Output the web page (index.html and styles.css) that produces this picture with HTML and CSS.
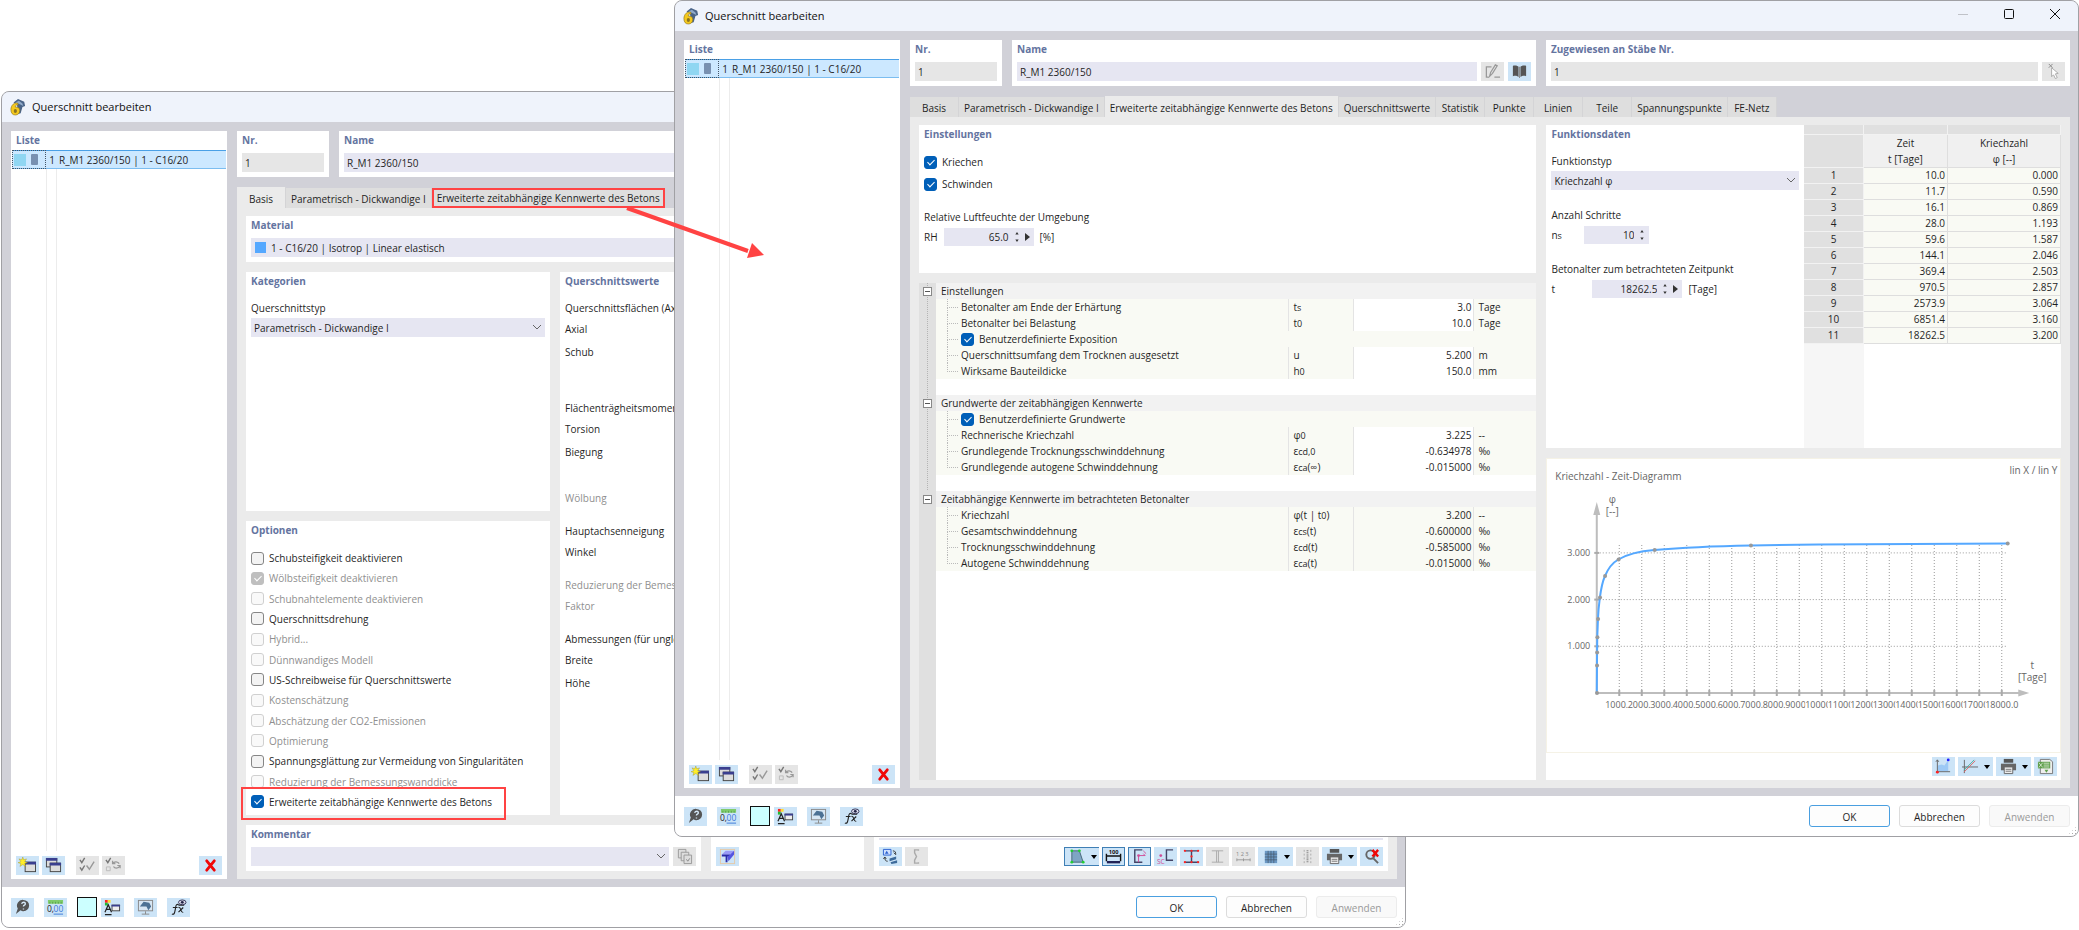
FILE: index.html
```html
<!DOCTYPE html>
<html lang="de">
<head>
    <meta charset="UTF-8">
    <meta name="viewport" content="width=device-width, initial-scale=1.0">
    <title>Querschnitt bearbeiten</title>
    <link rel="stylesheet" href="styles.css">
</head>
<body>
    <!-- Icon-Vorrat -->
    <svg class="sprite" aria-hidden="true">
        <symbol id="i-app" viewBox="0 0 18 20">
            <path d="M4 5 L9 1 L16 4 L17 9 L14 10 L12 17 L9 18 L8 8 Z" fill="#4a6488"/>
            <path d="M6 5 L10 3 L14 6 L15 9 L11 7 Z" fill="#8fa9c9"/>
            <path d="M9 6 C5 4 1 8 1 13 C1 17 3 19 6 19 C9 19 11 17 11 14 C11 11 9 10 6 10 C6 8 7 7 9 8 Z" fill="#f4c81e" stroke="#8a7420" stroke-width=".7"/>
            <ellipse cx="6" cy="14.5" rx="1.8" ry="2.2" fill="#8a7420"/>
        </symbol>
        <symbol id="i-new" viewBox="0 0 20 18">
            <rect x="7.5" y="5.5" width="11" height="10" fill="#ddd" stroke="#444"/>
            <path d="M7 5h12v3H7z" fill="#3a3f8f"/>
            <path d="M5 0l1 3 3-1-2 3 3 1-3 1 1 3-3-2-3 2 1-3-3-1 3-1-2-3 3 1z" fill="#ffee2a" stroke="#998c1a" stroke-width=".4"/>
        </symbol>
        <symbol id="i-windows" viewBox="0 0 20 18">
            <rect x="2.5" y="1.5" width="11" height="9" fill="#ddd" stroke="#444"/>
            <path d="M2 1h12v3H2z" fill="#3a3f8f"/>
            <rect x="6.5" y="6.5" width="11" height="9" fill="#ddd" stroke="#444"/>
            <path d="M6 6h12v3H6z" fill="#3a3f8f"/>
        </symbol>
        <symbol id="i-checkall" viewBox="0 0 20 18">
            <path d="M2 3l2 3 3-5M2 11l2 3 3-5" fill="none" stroke="#777" stroke-width="1.5"/>
            <path d="M9 9l3 4 5-8" fill="none" stroke="#999" stroke-width="1.5"/>
        </symbol>
        <symbol id="i-checkswap" viewBox="0 0 20 18">
            <path d="M2 3l2 3 3-5" fill="none" stroke="#777" stroke-width="1.5"/>
            <path d="M2.5 10.5h4v4h-4z" fill="none" stroke="#bbb"/>
            <path d="M9 7c2-3 6-2 7 0M17 9c-2 4-6 3-7 1M9 4v3h3M17 12V9h-3" fill="none" stroke="#999" stroke-width="1.3"/>
        </symbol>
        <symbol id="i-delete" viewBox="0 0 20 18">
            <path d="M6 4l8 10M14 4L6 14" fill="none" stroke="#f00808" stroke-width="3" stroke-linecap="round"/>
        </symbol>
        <symbol id="i-help" viewBox="0 0 20 18">
            <path d="M11 1a6 6 0 0 1 0 12c-1 0-2 0-3-1L3 16l2-6A6 6 0 0 1 11 1z" fill="#555"/>
            <path d="M9 5c1-2 4-2 4 0s-2 1-2 3M11 10v1" fill="none" stroke="#d6e8f6" stroke-width="1.5"/>
        </symbol>
        <symbol id="i-units" viewBox="0 0 20 18">
            <path d="M2 1h16v4H2z" fill="#7fcb6c"/>
            <path d="M4 3v2M7 3v2M10 3v2M13 3v2M16 3v2" stroke="#4b9440" stroke-width=".7"/>
            <text x="1" y="14" font-size="9" fill="#222">0,</text>
            <text x="8" y="14" font-size="9" fill="#3b78d8">00</text>
            <path d="M8 16h10" stroke="#3b78d8"/>
        </symbol>
        <symbol id="i-legend" viewBox="0 0 20 18">
            <path d="M2 1h3v3H2z" fill="#f22"/><path d="M5 1h3v3H5z" fill="#fd3"/><path d="M2 4h3v3H2z" fill="#2b3"/>
            <path d="M2 14L5.5 6 9 14M3.5 11h4M2 16.5h7" fill="none" stroke="#222" stroke-width="1.3"/>
            <rect x="9.5" y="6.5" width="8" height="6" fill="#eee" stroke="#444"/><path d="M9 6h9v2H9z" fill="#3a3f8f"/>
        </symbol>
        <symbol id="i-view" viewBox="0 0 20 18">
            <rect x="2.5" y="1.5" width="15" height="11" fill="#d7e6f3" stroke="#888"/>
            <path d="M4 8l4-5 6 1 2 4-3 4-2-4z" fill="#4c7194"/>
            <path d="M10 13v3M6 16h8" stroke="#888"/>
        </symbol>
        <symbol id="i-fx" viewBox="0 0 20 18">
            <path d="M3 16c3 1 3-2 4-7 0-2 1-4 3-3M4 9h5M10 9c3-1 2 6 5 5M15 9l-5 5M10 6.5h6" fill="none" stroke="#222" stroke-width="1.2"/>
            <ellipse cx="14" cy="3.5" rx="4" ry="2.5" fill="#dde" stroke="#335"/><circle cx="14" cy="3.5" r="1.5" fill="#224"/>
        </symbol>
        <symbol id="i-edit" viewBox="0 0 20 18">
            <path d="M9 4H3.500v11H6M12 15h6M7 14l1-4 5-8 2 1-5 8z" fill="none" stroke="#999" stroke-width="1.3"/>
        </symbol>
        <symbol id="i-book" viewBox="0 0 20 18">
            <path d="M3 3c3-1 5 0 6 1v11c-1-1-3-2-6-1zM17 3c-3-1-5 0-6 1v11c1-1 3-2 6-1z" fill="#555"/>
            <path d="M9.500 4h1v12h-1z" fill="#888"/>
        </symbol>
        <symbol id="i-pick" viewBox="0 0 20 18">
            <path d="M5 1l4 4M9 1L5 5" stroke="#888"/>
            <path d="M8 5l7 6-3 .5 2 4-2 1-2-4-2 2z" fill="#fff" stroke="#aaa"/>
        </symbol>
        <symbol id="i-area" viewBox="0 0 20 18">
            <path d="M4 14V8l4-1 3 1 4-6v12z" fill="#9cc9f5"/>
            <path d="M3.5 2v14M2 14.5h15M2 4l1.5-2L5 4" fill="none" stroke="#666"/>
            <circle cx="3.5" cy="15" r="1.5" fill="#f22"/><circle cx="15" cy="2" r="1.5" fill="#22f"/>
        </symbol>
        <symbol id="i-lines" viewBox="0 0 20 18">
            <path d="M3.5 2v14M1 9.5h17" stroke="#666"/>
            <path d="M3 15L15 3" stroke="#d66"/><path d="M3 13L14 2" stroke="#4a9"/>
        </symbol>
        <symbol id="i-print" viewBox="0 0 20 18">
            <path d="M5 1h10v4H5z" fill="#555"/><path d="M2 6h16v7H2z" fill="#666"/>
            <path d="M5.5 9.5h9v7h-9z" fill="#eee" stroke="#666"/><path d="M7 12h6M7 14h6" stroke="#777"/>
        </symbol>
        <symbol id="i-table" viewBox="0 0 20 18">
            <path d="M4.5 1.500h10l3 2.500v12.500h-13z" fill="#eee" stroke="#777"/>
            <rect x="2" y="4" width="13" height="7" fill="#5f9f4c"/>
            <path d="M8 5.5h6M8 7.5h6M8 9.5h6M3 5l4 5M7 5l-4 5" stroke="#e8f3e4" stroke-width=".8"/>
            <path d="M9 12.500h4l-2 3z" fill="#5f9f4c"/>
        </symbol>
        <symbol id="i-copies" viewBox="0 0 20 18">
            <path d="M3.500 1.500h8v9h-8z" fill="#ddd" stroke="#999"/>
            <path d="M6.500 4.500h8v9h-8z" fill="#ddd" stroke="#999"/>
            <path d="M9.500 7.500h8v9h-8z" fill="#ddd" stroke="#999"/>
            <path d="M12 12l1.500 2 2-3" fill="none" stroke="#888"/>
        </symbol>
        <symbol id="i-beam" viewBox="0 0 20 18">
            <rect x="2.5" y="1.5" width="15" height="15" fill="none" stroke="#e3c9a8"/>
            <path d="M4 7l4-4h9l-3 4z" fill="#9a9af5"/><path d="M4 7h9v2h-3v6H8V9H4z" fill="#2a2aa8"/><path d="M13 7l4-4v4l-6 7-1-5z" fill="#5555e0"/>
        </symbol>
        <symbol id="i-swap" viewBox="0 0 20 18">
            <path d="M2.5 1.5h8v6h-8z" fill="#cfe0ff" stroke="#2b62d0"/><path d="M4 6l2-3 2 3z" fill="#2b62d0"/>
            <path d="M9 11l7-2v3l-7 2zM10 15l7-2v3l-6 1z" fill="#3d6a9a"/>
            <path d="M12.500 3c3 0 3 2 3 4l-2-2M4 10c0 3 1 4 3 4M2.500 11.500L4 9.500l1.500 2" fill="none" stroke="#333"/>
        </symbol>
        <symbol id="i-brace" viewBox="0 0 20 18">
            <path d="M12 3v-1h-4v3l2 4-2 4v3h4v-1" fill="none" stroke="#aaa" stroke-width="1.500"/>
        </symbol>
        <symbol id="i-section" viewBox="0 0 20 18">
            <path d="M4 3h8l4 12H4z" fill="#7ea5c4" stroke="#467"/>
            <g fill="#2c3"><circle cx="4" cy="3" r="1.5"/><circle cx="12" cy="3" r="1.5"/><circle cx="4" cy="15" r="1.5"/><circle cx="16" cy="15" r="1.5"/></g>
        </symbol>
        <symbol id="i-dim" viewBox="0 0 20 18">
            <text x="5" y="6" font-size="6" font-weight="700" fill="#111">100</text>
            <path d="M2.5 6v8M17.5 6v8M3 8.5h14" stroke="#111" stroke-width="1.5"/><path d="M3 15h14" stroke="#225" stroke-width="2.5"/>
        </symbol>
        <symbol id="i-axes" viewBox="0 0 20 18">
            <path d="M13 2H5v13h8" fill="none" stroke="#446" stroke-width="1.5"/>
            <path d="M9 8h7l-2-2M9 8v7M14 3l3 3" fill="none" stroke="#d04b96"/><circle cx="9" cy="8" r="1.5" fill="#d04b96"/>
        </symbol>
        <symbol id="i-sc" viewBox="0 0 20 18">
            <path d="M18 2h-7v11h7" fill="none" stroke="#446" stroke-width="1.5"/>
            <circle cx="5" cy="8" r="1.5" fill="#d04b96"/><text x="1" y="17" font-size="7" fill="#d04b96">SC</text>
        </symbol>
        <symbol id="i-ibeam" viewBox="0 0 20 18">
            <path d="M3 3h14M3 15h14M10 3v12" stroke="#446" stroke-width="1.5"/>
            <g fill="#f22"><circle cx="3" cy="3" r="1.2"/><circle cx="17" cy="3" r="1.2"/><circle cx="3" cy="15" r="1.2"/><circle cx="17" cy="15" r="1.2"/><circle cx="10" cy="3" r="1.2"/><circle cx="10" cy="15" r="1.2"/><circle cx="10" cy="9" r="1.2"/></g>
        </symbol>
        <symbol id="i-ibeam-off" viewBox="0 0 20 18">
            <path d="M4 3h12M4 15h12M9 3v12M11 3v12" stroke="#aaa" fill="none"/>
        </symbol>
        <symbol id="i-numbers" viewBox="0 0 20 18">
            <text x="2" y="8" font-size="6" fill="#888">1 2 3</text><path d="M3 12.5h14M3 11v3M10 11v3M17 11v3" stroke="#999"/>
        </symbol>
        <symbol id="i-grid" viewBox="0 0 20 18">
            <rect x="4" y="3" width="13" height="13" fill="#6b98c4"/><path d="M4 6.5h13M4 9.5h13M4 12.5h13M7.5 3v13M10.5 3v13M13.5 3v13" stroke="#456" stroke-width=".7"/>
        </symbol>
        <symbol id="i-marks" viewBox="0 0 20 18">
            <path d="M10 2v14" stroke="#888" stroke-dasharray="1 1" stroke-width="2"/><path d="M6.5 2v14M13.5 2v14" stroke="#aaa" stroke-dasharray="2 2"/>
        </symbol>
        <symbol id="i-zoomoff" viewBox="0 0 20 18">
            <circle cx="9" cy="7" r="4.5" fill="none" stroke="#666" stroke-width="2"/><path d="M12 11l5 5" stroke="#666" stroke-width="2"/>
            <path d="M11 2l6 7M17 2l-6 7" stroke="#f00808" stroke-width="2.5"/>
        </symbol>
    </svg>

    <!-- Hinteres Fenster: Register Basis -->
    <section class="window window-back">
        <header class="titlebar">
            <svg class="app-icon"><use href="#i-app"/></svg>
            <h1>Querschnitt bearbeiten</h1>
        </header>
        <div class="window-body">
            <aside class="panel list-panel">
                <h2>Liste</h2>
                <div class="list">
                    <div class="list-row">
                        <span class="list-mark"><i class="mark-color"></i><i class="mark-shape"></i></span>
                        <span class="list-no">1</span>
                        <span class="list-name">R_M1 2360/150 | 1 - C16/20</span>
                    </div>
                </div>
                <div class="list-tools">
                    <button class="tool" title="Neu"><svg><use href="#i-new"/></svg></button>
                    <button class="tool" title="Kopieren"><svg><use href="#i-windows"/></svg></button>
                    <button class="tool off apart" disabled title="Alle"><svg><use href="#i-checkall"/></svg></button>
                    <button class="tool off" disabled title="Umkehren"><svg><use href="#i-checkswap"/></svg></button>
                    <button class="tool last" title="Löschen"><svg><use href="#i-delete"/></svg></button>
                </div>
            </aside>
            <div class="main">
                <div class="head-row">
                    <div class="panel nr-panel">
                        <h2><label for="a-nr">Nr.</label></h2>
                        <input class="field readonly" id="a-nr" value="1" readonly>
                    </div>
                    <div class="panel grow">
                        <h2><label for="a-name">Name</label></h2>
                        <input class="field" id="a-name" value="R_M1 2360/150">
                    </div>
                    <div class="panel grow"></div>
                </div>
                <nav class="tabs">
                    <button class="tab active">Basis</button>
                    <button class="tab">Parametrisch - Dickwandige I</button>
                    <button class="tab marked">Erweiterte zeitabhängige Kennwerte des Betons</button>
                </nav>
                <div class="sheet">
                    <div class="panel">
                        <h2><label for="a-mat">Material</label></h2>
                        <div class="material">
                            <i class="swatch"></i>
                            <input class="field" id="a-mat" value="1 - C16/20 | Isotrop | Linear elastisch">
                        </div>
                    </div>
                    <div class="basis">
                        <div class="basis-left">
                            <div class="panel categories">
                                <h2>Kategorien</h2>
                                <label class="caption" for="a-type">Querschnittstyp</label>
                                <div class="select">
                                    <select id="a-type"><option>Parametrisch - Dickwandige I</option></select>
                                    <svg viewBox="0 0 8 5"><path d="M0 0l4 4 4-4"/></svg>
                                </div>
                            </div>
                            <div class="panel options">
                                <h2>Optionen</h2>
                                <div class="option-list">
                                    <label><input type="checkbox">Schubsteifigkeit deaktivieren</label>
                                    <label class="dim"><input type="checkbox" checked disabled>Wölbsteifigkeit deaktivieren</label>
                                    <label class="dim"><input type="checkbox" disabled>Schubnahtelemente deaktivieren</label>
                                    <label><input type="checkbox">Querschnittsdrehung</label>
                                    <label class="dim"><input type="checkbox" disabled>Hybrid...</label>
                                    <label class="dim"><input type="checkbox" disabled>Dünnwandiges Modell</label>
                                    <label><input type="checkbox">US-Schreibweise für Querschnittswerte</label>
                                    <label class="dim"><input type="checkbox" disabled>Kostenschätzung</label>
                                    <label class="dim"><input type="checkbox" disabled>Abschätzung der CO2-Emissionen</label>
                                    <label class="dim"><input type="checkbox" disabled>Optimierung</label>
                                    <label><input type="checkbox">Spannungsglättung zur Vermeidung von Singularitäten</label>
                                    <label class="dim"><input type="checkbox" disabled>Reduzierung der Bemessungswanddicke</label>
                                    <label class="marked"><input type="checkbox" checked>Erweiterte zeitabhängige Kennwerte des Betons</label>
                                </div>
                            </div>
                        </div>
                        <div class="panel values">
                            <h2>Querschnittswerte</h2>
                            <dl>
                                <dt>Querschnittsflächen (Axial/Schub)</dt>
                                <dd>Axial</dd>
                                <dd>Schub</dd>
                            </dl>
                            <dl class="after-wide">
                                <dt>Flächenträgheitsmomente (Torsion/Biegung)</dt>
                                <dd>Torsion</dd>
                                <dd>Biegung</dd>
                            </dl>
                            <dl class="after-mid dim">
                                <dt>Wölbung</dt>
                            </dl>
                            <dl>
                                <dt>Hauptachsenneigung</dt>
                                <dd>Winkel</dd>
                            </dl>
                            <dl class="dim">
                                <dt>Reduzierung der Bemessungswanddicke</dt>
                                <dd>Faktor</dd>
                            </dl>
                            <dl>
                                <dt>Abmessungen (für ungleichmäßige Temperaturlasten)</dt>
                                <dd>Breite</dd>
                                <dd>Höhe</dd>
                            </dl>
                        </div>
                    </div>
                    <div class="bottom-row">
                        <div class="panel comment">
                            <h2><label for="a-comment">Kommentar</label></h2>
                            <div class="line">
                                <div class="select">
                                    <select id="a-comment"><option></option></select>
                                    <svg viewBox="0 0 8 5"><path d="M0 0l4 4 4-4"/></svg>
                                </div>
                                <button class="tool off" disabled title="Übernehmen"><svg><use href="#i-copies"/></svg></button>
                            </div>
                        </div>
                        <div class="panel check">
                            <button class="tool" title="Bemessung"><svg><use href="#i-beam"/></svg></button>
                        </div>
                        <div class="panel graphic">
                            <div class="graphic-tools">
                                <button class="tool" title="Tauschen"><svg><use href="#i-swap"/></svg></button>
                                <button class="tool off" disabled title="Form"><svg><use href="#i-brace"/></svg></button>
                                <button class="tool drop on last" title="Ansicht"><svg><use href="#i-section"/></svg><b></b></button>
                                <button class="tool on" title="Maße"><svg><use href="#i-dim"/></svg></button>
                                <button class="tool on" title="Achsen"><svg><use href="#i-axes"/></svg></button>
                                <button class="tool" title="Schubmittelpunkt"><svg><use href="#i-sc"/></svg></button>
                                <button class="tool" title="Punkte"><svg><use href="#i-ibeam"/></svg></button>
                                <button class="tool off" disabled title="Linien"><svg><use href="#i-ibeam-off"/></svg></button>
                                <button class="tool off" disabled title="Nummern"><svg><use href="#i-numbers"/></svg></button>
                                <button class="tool drop" title="Raster"><svg><use href="#i-grid"/></svg><b></b></button>
                                <button class="tool off" disabled title="Marken"><svg><use href="#i-marks"/></svg></button>
                                <button class="tool drop" title="Drucken"><svg><use href="#i-print"/></svg><b></b></button>
                                <button class="tool" title="Zoom zurücksetzen"><svg><use href="#i-zoomoff"/></svg></button>
                            </div>
                        </div>
                    </div>
                </div>
            </div>
        </div>
        <footer class="footer">
            <button class="tool" title="Hilfe"><svg><use href="#i-help"/></svg></button>
            <button class="tool" title="Einheiten"><svg><use href="#i-units"/></svg></button>
            <button class="color-box" title="Farbe"></button>
            <button class="tool" title="Legende"><svg><use href="#i-legend"/></svg></button>
            <button class="tool" title="Darstellung"><svg><use href="#i-view"/></svg></button>
            <button class="tool" title="Formeln"><svg><use href="#i-fx"/></svg></button>
            <div class="dialog-buttons">
                <button class="btn primary">OK</button>
                <button class="btn">Abbrechen</button>
                <button class="btn" disabled>Anwenden</button>
            </div>
            <i class="grip"></i>
        </footer>
    </section>

    <!-- Vorderes Fenster: Erweiterte zeitabhängige Kennwerte -->
    <section class="window window-front">
        <header class="titlebar">
            <svg class="app-icon"><use href="#i-app"/></svg>
            <h1>Querschnitt bearbeiten</h1>
            <div class="win-controls">
                <button title="Minimieren" disabled><svg viewBox="0 0 12 12"><path d="M1 6.5h10"/></svg></button>
                <button title="Maximieren"><svg viewBox="0 0 12 12"><rect x="1.5" y="1.5" width="9" height="9" rx="1"/></svg></button>
                <button title="Schließen"><svg viewBox="0 0 12 12"><path d="M1 1l10 10M11 1L1 11"/></svg></button>
            </div>
        </header>
        <div class="window-body">
            <aside class="panel list-panel">
                <h2>Liste</h2>
                <div class="list">
                    <div class="list-row">
                        <span class="list-mark"><i class="mark-color"></i><i class="mark-shape"></i></span>
                        <span class="list-no">1</span>
                        <span class="list-name">R_M1 2360/150 | 1 - C16/20</span>
                    </div>
                </div>
                <div class="list-tools">
                    <button class="tool" title="Neu"><svg><use href="#i-new"/></svg></button>
                    <button class="tool" title="Kopieren"><svg><use href="#i-windows"/></svg></button>
                    <button class="tool off apart" disabled title="Alle"><svg><use href="#i-checkall"/></svg></button>
                    <button class="tool off" disabled title="Umkehren"><svg><use href="#i-checkswap"/></svg></button>
                    <button class="tool last" title="Löschen"><svg><use href="#i-delete"/></svg></button>
                </div>
            </aside>
            <div class="main">
                <div class="head-row">
                    <div class="panel nr-panel">
                        <h2><label for="b-nr">Nr.</label></h2>
                        <input class="field readonly" id="b-nr" value="1" readonly>
                    </div>
                    <div class="panel grow">
                        <h2><label for="b-name">Name</label></h2>
                        <div class="line">
                            <input class="field" id="b-name" value="R_M1 2360/150">
                            <button class="tool off" disabled title="Bearbeiten"><svg><use href="#i-edit"/></svg></button>
                            <button class="tool" title="Bibliothek"><svg><use href="#i-book"/></svg></button>
                        </div>
                    </div>
                    <div class="panel grow">
                        <h2><label for="b-members">Zugewiesen an Stäbe Nr.</label></h2>
                        <div class="line">
                            <input class="field readonly" id="b-members" value="1" readonly>
                            <button class="tool off" disabled title="Auswählen"><svg><use href="#i-pick"/></svg></button>
                        </div>
                    </div>
                </div>
                <nav class="tabs">
                    <button class="tab">Basis</button>
                    <button class="tab">Parametrisch - Dickwandige I</button>
                    <button class="tab active">Erweiterte zeitabhängige Kennwerte des Betons</button>
                    <button class="tab">Querschnittswerte</button>
                    <button class="tab">Statistik</button>
                    <button class="tab">Punkte</button>
                    <button class="tab">Linien</button>
                    <button class="tab">Teile</button>
                    <button class="tab">Spannungspunkte</button>
                    <button class="tab">FE-Netz</button>
                </nav>
                <div class="sheet sheet-cols">
                    <div class="col-left">
                        <div class="panel settings">
                            <h2>Einstellungen</h2>
                            <label class="check-line"><input type="checkbox" checked>Kriechen</label>
                            <label class="check-line"><input type="checkbox" checked>Schwinden</label>
                            <p class="caption">Relative Luftfeuchte der Umgebung</p>
                            <div class="value-line">
                                <label for="b-rh">RH</label>
                                <div class="spin wide">
                                    <input id="b-rh" value="65.0">
                                    <svg viewBox="0 0 6 12"><path d="M1 3l2-3 2 3zM1 9l2 3 2-3z"/></svg>
                                    <svg class="play" viewBox="0 0 5 8"><path d="M0 0l5 4-5 4z"/></svg>
                                </div>
                                <span>[%]</span>
                            </div>
                        </div>
                        <div class="tree-panel">
                            <table class="tree">
                                <colgroup><col class="c-gutter"><col><col class="c-sym"><col class="c-val"><col class="c-unit"></colgroup>
                                <tbody>
                                    <tr class="group"><td><button class="toggle"></button></td><th colspan="4">Einstellungen</th></tr>
                                    <tr><td></td><td>Betonalter am Ende der Erhärtung</td><td>t<small>s</small></td><td class="edit">3.0</td><td>Tage</td></tr>
                                    <tr><td></td><td>Betonalter bei Belastung</td><td>t<small>0</small></td><td class="edit">10.0</td><td>Tage</td></tr>
                                    <tr><td></td><td colspan="4"><label><input type="checkbox" checked>Benutzerdefinierte Exposition</label></td></tr>
                                    <tr><td></td><td>Querschnittsumfang dem Trocknen ausgesetzt</td><td>u</td><td class="edit">5.200</td><td>m</td></tr>
                                    <tr class="end"><td></td><td>Wirksame Bauteildicke</td><td>h<small>0</small></td><td class="edit">150.0</td><td>mm</td></tr>
                                    <tr class="gap"><td></td><td colspan="4"></td></tr>
                                    <tr class="group"><td><button class="toggle"></button></td><th colspan="4">Grundwerte der zeitabhängigen Kennwerte</th></tr>
                                    <tr><td></td><td colspan="4"><label><input type="checkbox" checked>Benutzerdefinierte Grundwerte</label></td></tr>
                                    <tr><td></td><td>Rechnerische Kriechzahl</td><td>φ<small>0</small></td><td class="edit">3.225</td><td>--</td></tr>
                                    <tr><td></td><td>Grundlegende Trocknungsschwinddehnung</td><td>ε<small>cd,0</small></td><td class="edit">-0.634978</td><td>‰</td></tr>
                                    <tr class="end"><td></td><td>Grundlegende autogene Schwinddehnung</td><td>ε<small>ca</small>(∞)</td><td class="edit">-0.015000</td><td>‰</td></tr>
                                    <tr class="gap"><td></td><td colspan="4"></td></tr>
                                </tbody>
                                <tbody class="last-group">
                                    <tr class="group"><td><button class="toggle"></button></td><th colspan="4">Zeitabhängige Kennwerte im betrachteten Betonalter</th></tr>
                                    <tr><td></td><td>Kriechzahl</td><td>φ(t | t<small>0</small>)</td><td>3.200</td><td>--</td></tr>
                                    <tr><td></td><td>Gesamtschwinddehnung</td><td>ε<small>cs</small>(t)</td><td>-0.600000</td><td>‰</td></tr>
                                    <tr><td></td><td>Trocknungsschwinddehnung</td><td>ε<small>cd</small>(t)</td><td>-0.585000</td><td>‰</td></tr>
                                    <tr class="end"><td></td><td>Autogene Schwinddehnung</td><td>ε<small>ca</small>(t)</td><td>-0.015000</td><td>‰</td></tr>
                                </tbody>
                            </table>
                        </div>
                    </div>
                    <div class="col-right">
                        <div class="function">
                            <div class="panel function-form">
                                <h2>Funktionsdaten</h2>
                                <label class="caption" for="b-ftype">Funktionstyp</label>
                                <div class="select">
                                    <select id="b-ftype"><option>Kriechzahl φ</option></select>
                                    <svg viewBox="0 0 8 5"><path d="M0 0l4 4 4-4"/></svg>
                                </div>
                                <p class="caption spaced">Anzahl Schritte</p>
                                <div class="value-line">
                                    <label class="sym" for="b-steps">n<small>s</small></label>
                                    <div class="spin">
                                        <input id="b-steps" value="10">
                                        <svg viewBox="0 0 6 12"><path d="M1 3l2-3 2 3zM1 9l2 3 2-3z"/></svg>
                                    </div>
                                </div>
                                <p class="caption spaced">Betonalter zum betrachteten Zeitpunkt</p>
                                <div class="value-line">
                                    <label class="sym sym-wide" for="b-age">t</label>
                                    <div class="spin wide">
                                        <input id="b-age" value="18262.5">
                                        <svg viewBox="0 0 6 12"><path d="M1 3l2-3 2 3zM1 9l2 3 2-3z"/></svg>
                                        <svg class="play" viewBox="0 0 5 8"><path d="M0 0l5 4-5 4z"/></svg>
                                    </div>
                                    <span>[Tage]</span>
                                </div>
                            </div>
                            <div class="data-wrap">
                                <table class="data">
                                    <colgroup><col class="d-no"><col class="d-time"><col></colgroup>
                                    <thead>
                                        <tr class="strip"><th></th><th></th><th></th></tr>
                                        <tr><th></th><th>Zeit<br>t [Tage]</th><th>Kriechzahl<br>φ [--]</th></tr>
                                    </thead>
                                    <tbody>
                                        <tr><th>1</th><td>10.0</td><td>0.000</td></tr>
                                        <tr><th>2</th><td>11.7</td><td>0.590</td></tr>
                                        <tr><th>3</th><td>16.1</td><td>0.869</td></tr>
                                        <tr><th>4</th><td>28.0</td><td>1.193</td></tr>
                                        <tr><th>5</th><td>59.6</td><td>1.587</td></tr>
                                        <tr><th>6</th><td>144.1</td><td>2.046</td></tr>
                                        <tr><th>7</th><td>369.4</td><td>2.503</td></tr>
                                        <tr><th>8</th><td>970.5</td><td>2.857</td></tr>
                                        <tr><th>9</th><td>2573.9</td><td>3.064</td></tr>
                                        <tr><th>10</th><td>6851.4</td><td>3.160</td></tr>
                                        <tr><th>11</th><td>18262.5</td><td>3.200</td></tr>
                                    </tbody>
                                </table>
                            </div>
                        </div>
                        <div class="chart-panel">
                            <div class="chart">
                                <svg id="chart" viewBox="0 0 512 293">
                                    <text x="8" y="21">Kriechzahl - Zeit-Diagramm</text>
                                    <text x="510" y="15" text-anchor="end">lin X / lin Y</text>
                                    <g id="grid" class="grid"></g>
                                    <path class="axis" d="M49.5 234V55M49.5 234H472"/>
                                    <path class="axis-head" d="M46 56l3.5-13 3.5 13zM471 230.5l11 3.5-11 3.5z"/>
                                    <g id="ticks"></g>
                                    <text x="65" y="44" text-anchor="middle">φ</text>
                                    <text x="65" y="56" text-anchor="middle">[--]</text>
                                    <text x="485" y="210" text-anchor="middle">t</text>
                                    <text x="485" y="222" text-anchor="middle">[Tage]</text>
                                    <path class="curve" d="M49.5 234L49.7 206 49.8 193 50 178 50.7 160C51 150 52 143 52.6 138.5C54 128 55.5 122 57.7 117C61 109 65 104 71 100.5C81 94.5 95 92 107 91C135 88.5 170 87 203.5 86.4C290 85.2 380 84.6 460 84.6"/>
                                    <g id="points" class="points"></g>
                                </svg>
                            </div>
                            <div class="chart-tools">
                                <button class="tool" title="Fläche"><svg><use href="#i-area"/></svg></button>
                                <button class="tool drop" title="Achsen"><svg><use href="#i-lines"/></svg><b></b></button>
                                <button class="tool drop" title="Drucken"><svg><use href="#i-print"/></svg><b></b></button>
                                <button class="tool" title="Export"><svg><use href="#i-table"/></svg></button>
                            </div>
                        </div>
                    </div>
                </div>
            </div>
        </div>
        <footer class="footer">
            <button class="tool" title="Hilfe"><svg><use href="#i-help"/></svg></button>
            <button class="tool" title="Einheiten"><svg><use href="#i-units"/></svg></button>
            <button class="color-box" title="Farbe"></button>
            <button class="tool" title="Legende"><svg><use href="#i-legend"/></svg></button>
            <button class="tool" title="Darstellung"><svg><use href="#i-view"/></svg></button>
            <button class="tool" title="Formeln"><svg><use href="#i-fx"/></svg></button>
            <div class="dialog-buttons">
                <button class="btn primary">OK</button>
                <button class="btn">Abbrechen</button>
                <button class="btn" disabled>Anwenden</button>
            </div>
            <i class="grip"></i>
        </footer>
    </section>

    <!-- Verweispfeil vom Register zum vorderen Fenster -->
    <svg class="arrow" viewBox="0 0 150 60"><path d="M7 8l121 43" stroke="#ff4343" stroke-width="4"/><path d="M132 43l12 12-17 3z" fill="#ff4343"/></svg>

    <script src="chart.js"></script>
</body>
</html>
```
FILE: chart.js
```js
// Achsen: 1000 Tage = 22.5, Kriechzahl 1.0 = 46.7
const X0 = 49.5, Y0 = 234, DX = 22.5, DY = 46.7;
const data = [[10, 0], [11.7, 0.59], [16.1, 0.869], [28, 1.193], [59.6, 1.587], [144.1, 2.046],
    [369.4, 2.503], [970.5, 2.857], [2573.9, 3.064], [6851.4, 3.16], [18262.5, 3.2]];

let grid = '', ticks = '', points = '';

for (let i = 1; i <= 18; i++) {
    const x = X0 + i * DX;
    const label = (i * 1000).toFixed(1);
    // jede Beschriftung verdeckt das Ende der vorigen
    const w = label.length > 6 ? 33 : 28;
    grid += `<path d="M${x} ${Y0}V86"/>`;
    ticks += `<path class="tick" d="M${x} 231v6"/>`;
    ticks += `<rect x="${x - w / 2}" y="239" width="${w}" height="14" fill="#fff"/>`;
    ticks += `<text class="small" x="${x}" y="249" text-anchor="middle">${label}</text>`;
}

for (let i = 1; i <= 3; i++) {
    const y = Y0 - i * DY;
    grid += `<path d="M${X0} ${y}H460"/>`;
    ticks += `<path class="tick" d="M47 ${y}h5"/>`;
    ticks += `<text class="small" x="43" y="${y + 3}" text-anchor="end">${i.toFixed(3)}</text>`;
}

data.forEach(([t, phi]) => {
    points += `<circle cx="${X0 + t / 1000 * DX}" cy="${Y0 - phi * DY}" r="2"/>`;
});

document.getElementById('grid').innerHTML = grid;
document.getElementById('ticks').innerHTML = ticks;
document.getElementById('points').innerHTML = points;
```
FILE: styles.css
```css
* {
    margin: 0;
    padding: 0;
    box-sizing: border-box;
}

body {
    position: relative;
    min-height: 100vh;
    overflow: hidden;
    background: #fff;
    color: #1f1f1f;
    font: 10px/16px "Open Sans", "Noto Sans", sans-serif;
}

button,
input,
select {
    font: inherit;
    color: inherit;
    border: none;
    outline: none;
}

small {
    font-size: 9px;
    line-height: 1;
}

.sprite {
    display: none;
}

/* Fenster */
.window {
    position: absolute;
    display: flex;
    flex-direction: column;
    background: #d1d1d8;
    border: 1px solid #a0a0a4;
    border-radius: 8px;
    overflow: hidden;
}

.window-back {
    left: 1px;
    top: 91px;
    width: 1405px;
    bottom: 2px;
}

.window-front {
    left: 674px;
    top: 0;
    right: 0;
    bottom: 93px;
}

.titlebar {
    flex: none;
    display: flex;
    align-items: center;
    height: 30px;
    padding-left: 8px;
    background: #eff3fb;
}

.titlebar h1 {
    font-size: 11px;
    font-weight: 400;
    color: #111;
}

.app-icon {
    width: 16px;
    height: 18px;
    margin-right: 6px;
}

.win-controls {
    display: flex;
    margin-left: auto;
}

.win-controls button {
    width: 46px;
    height: 28px;
    background: none;
}

.win-controls svg {
    width: 12px;
    height: 12px;
    fill: none;
    stroke: #111;
}

.win-controls button:disabled svg {
    stroke: #c0c2c8;
}

.window-body {
    flex: 1;
    min-height: 0;
    display: flex;
    gap: 10px;
    padding: 9px 8px 8px 9px;
}

.panel {
    background: #fff;
    padding: 1px 5px 5px;
}

.panel h2 {
    font-size: 10px;
    line-height: 16px;
    font-weight: 700;
    color: #6474a0;
}

.main {
    flex: 1;
    min-width: 0;
    display: flex;
    flex-direction: column;
}

/* Liste links */
.list-panel {
    width: 216px;
    display: flex;
    flex-direction: column;
    padding: 1px 0 4px;
}

.list-panel h2 {
    padding-left: 5px;
}

.list {
    flex: 1;
    margin: 2px 1px 0;
    background: linear-gradient(#ececec, #ececec) 34px 0 / 1px 100% no-repeat,
        linear-gradient(#ececec, #ececec) 44px 0 / 1px 100% no-repeat;
}

.list-row {
    display: flex;
    align-items: center;
    height: 19px;
    background: #cce8ff;
    border-top: 1px solid #4aa0e6;
    border-bottom: 1px solid #7bbdf0;
}

.list-mark {
    display: flex;
    align-items: center;
    gap: 5px;
    width: 34px;
    height: 19px;
    padding-left: 1px;
    border: 1px dotted #456;
}

.mark-color {
    width: 12px;
    height: 12px;
    background: #8fd6f2;
}

.mark-shape {
    width: 7px;
    height: 11px;
    background: #7890b0;
    border-radius: 1px;
}

.list-no {
    width: 9px;
    text-align: right;
}

.list-name {
    padding-left: 4px;
}

.list-tools {
    display: flex;
    gap: 3px;
    padding: 5px 5px 0;
}

.apart {
    margin-left: 8px;
}

/* Symbolschaltflächen */
.tool {
    flex: none;
    display: flex;
    align-items: center;
    justify-content: center;
    width: 23px;
    height: 19px;
    background: #cce4f7;
}

.tool svg {
    width: 19px;
    height: 17px;
}

.tool.off {
    background: #e5e5e5;
}

.tool.on {
    border: 1px solid #3f7fb5;
}

.tool.drop {
    width: 35px;
    gap: 4px;
}

.tool.drop b {
    border: 3px solid transparent;
    border-top: 4px solid #000;
    border-bottom: none;
}

.tool.drop.on {
    border-width: 1px 0 1px 1px;
}

.last {
    margin-left: auto;
}

/* Kopfzeile mit Nr., Name, Zuweisung */
.head-row {
    display: flex;
    gap: 10px;
}

.nr-panel {
    width: 92px;
}

.grow {
    flex: 1;
    min-width: 0;
}

.field {
    display: block;
    width: 100%;
    min-width: 0;
    height: 19px;
    padding: 1px 3px 0;
    background: #e6e6f2;
}

.field.readonly {
    background: #e6e6e6;
}

.head-row .panel {
    height: 46px;
}

.head-row h2,
.sheet > .panel h2,
.comment h2 {
    margin-bottom: 5px;
}

.line {
    display: flex;
    gap: 4px;
}

/* Register */
.tabs {
    display: flex;
    align-items: flex-end;
    margin-top: 10px;
}

.tab {
    min-width: 49px;
    height: 20px;
    padding: 2px 5px 0;
    background: #dedede;
    border-right: 1px solid #d4d4d6;
    white-space: nowrap;
}

.tab.active {
    height: 21px;
    background: #ebebeb;
}

.tab.marked {
    padding: 0 3px;
    border: 2px solid #ff4343;
}

.sheet {
    flex: 1;
    min-height: 0;
    display: flex;
    flex-direction: column;
    gap: 10px;
    padding: 8px 9px;
    background: #ebebeb;
}

/* Register Basis */
.material {
    display: flex;
    align-items: center;
    gap: 2px;
    background: #e6e6f2;
    padding-left: 4px;
}

.swatch {
    flex: none;
    width: 11px;
    height: 11px;
    background: #55a8ff;
}

.basis {
    flex: 1;
    min-height: 0;
    display: flex;
    gap: 10px;
}

.basis-left {
    width: 304px;
    display: flex;
    flex-direction: column;
    gap: 10px;
}

.categories {
    flex: 1;
}

.caption {
    display: block;
    margin-top: 11px;
}

.select {
    position: relative;
    flex: 1;
    margin-top: 2px;
}

.line .select {
    margin-top: 0;
}

.select select {
    display: block;
    appearance: none;
    width: 100%;
    height: 19px;
    padding: 1px 3px 0;
    background: #e6e6f2;
}

.select svg {
    position: absolute;
    right: 4px;
    top: 7px;
    width: 8px;
    height: 5px;
    fill: none;
    stroke: #666;
    pointer-events: none;
}

.options {
    height: 294px;
    display: flex;
    flex-direction: column;
}

.option-list {
    flex: 1;
    display: flex;
    flex-direction: column;
    justify-content: space-between;
    margin-top: 12px;
}

label input[type="checkbox"] {
    flex: none;
    appearance: none;
    position: relative;
    width: 13px;
    height: 13px;
    margin-right: 5px;
    background: #f3f3f3;
    border: 1px solid #868686;
    border-radius: 3px;
}

label input[type="checkbox"]:checked {
    background: #005fb8;
    border-color: #005fb8;
}

label input[type="checkbox"]:checked::after {
    content: "";
    position: absolute;
    left: 4px;
    top: 1px;
    width: 3px;
    height: 6px;
    border: solid #fff;
    border-width: 0 1px 1px 0;
    transform: rotate(45deg);
}

label input[type="checkbox"]:disabled {
    background: #f9f9f9;
    border-color: #d0d0d0;
}

label input[type="checkbox"]:disabled:checked {
    background: #bfbfbf;
    border-color: #bfbfbf;
}

.option-list label {
    position: relative;
    display: flex;
    align-items: center;
    height: 16px;
}

.option-list .marked::after {
    content: "";
    position: absolute;
    left: -10px;
    top: -7px;
    width: 261px;
    height: 29px;
    border: 2px solid #ff4343;
}

.dim {
    color: #8f8f8f;
}

.values {
    flex: 1;
    white-space: nowrap;
}

.values dl {
    margin-top: 17px;
}

.values h2 + dl {
    margin-top: 11px;
}

.values .after-wide {
    margin-top: 40px;
}

.values .after-mid {
    margin-top: 30px;
}

.values dd {
    margin-top: 5px;
}

.values dd + dd {
    margin-top: 7px;
}

.bottom-row {
    display: flex;
    gap: 10px;
}

.comment {
    width: 455px;
}

.check {
    width: 153px;
    display: flex;
    align-items: flex-end;
}

.graphic {
    flex: 1;
    display: flex;
    flex-direction: column;
    justify-content: flex-end;
}

.graphic-tools {
    display: flex;
    gap: 3px;
    padding-top: 7px;
    border-top: 2px solid #e6e6f2;
}

/* Register Kennwerte des Betons */
.sheet-cols {
    flex-direction: row;
}

.col-left,
.col-right {
    flex: 6 1 0;
    min-width: 0;
    display: flex;
    flex-direction: column;
    gap: 10px;
}

.col-right {
    flex-grow: 5;
}

.settings {
    height: 148px;
}

.check-line {
    display: flex;
    align-items: center;
    height: 22px;
}

.settings h2 {
    margin-bottom: 9px;
}

.settings .caption {
    margin-top: 14px;
}

.value-line {
    display: flex;
    align-items: center;
    gap: 6px;
    margin-top: 3px;
}

.spin {
    display: flex;
    align-items: center;
    gap: 5px;
    width: 65px;
    height: 18px;
    padding-right: 4px;
    background: #e6e6f2;
}

.spin.wide {
    width: 90px;
}

.spin input {
    flex: 1;
    min-width: 0;
    background: none;
    text-align: right;
}

.spin svg {
    width: 6px;
    height: 10px;
    fill: #333;
}

.spin .play {
    width: 5px;
    height: 8px;
}

.tree-panel {
    flex: 1;
    min-height: 0;
    background: linear-gradient(to right, #e0e0e0 17px, #fff 17px);
}

table {
    width: 100%;
    table-layout: fixed;
    border-collapse: separate;
    border-spacing: 0;
}

.c-gutter { width: 17px; }
.c-sym { width: 65px; }
.c-val { width: 120px; }
.c-unit { width: 63px; }

.tree td,
.tree th {
    height: 16px;
    line-height: 14px;
    font-weight: 400;
    text-align: left;
    white-space: nowrap;
}

.tree th {
    padding-left: 5px;
    background: #f2f2f2;
}

.tree td:first-child {
    padding-left: 4px;
    background: repeating-linear-gradient(#b4b4b4 0 1px, transparent 1px 2px) 8px 0 / 1px 100% no-repeat;
}

.tree .last-group td:first-child {
    background: none;
}

.tree td:nth-child(n + 2) {
    padding-left: 4px;
    background: #f9faf4;
    border-left: 1px solid #e4e4e4;
}

.tree td:nth-child(2) {
    position: relative;
    padding-left: 25px;
    border-left: none;
}

.tree td:nth-child(2)::before {
    content: "";
    position: absolute;
    left: 11px;
    top: 0;
    width: 10px;
    height: 8px;
    border-left: 1px dotted #bbb;
    border-bottom: 1px dotted #bbb;
}

.tree tr:not(.end) td:nth-child(2)::after {
    content: "";
    position: absolute;
    left: 11px;
    top: 8px;
    height: 8px;
    border-left: 1px dotted #bbb;
}

.tree .gap td:nth-child(2) {
    background: #fff;
}

.tree .gap td:nth-child(2)::before,
.tree .gap td:nth-child(2)::after {
    display: none;
}

.tree td:nth-child(4) {
    padding-right: 2px;
    text-align: right;
}

.tree td.edit {
    background: #fff;
}

.tree label {
    display: flex;
    align-items: center;
    height: 16px;
}

.toggle {
    display: block;
    width: 9px;
    height: 9px;
    border: 1px solid #888;
    background: linear-gradient(#555, #555) center / 5px 1px no-repeat #fff;
}

/* Funktionsdaten */
.function {
    display: flex;
    height: 323px;
    background: #fff;
}

.function-form {
    flex: 1;
}

.function-form .spaced {
    margin-top: 17px;
}

.sym {
    width: 27px;
}

.sym-wide {
    width: 35px;
}

.data-wrap {
    width: 257px;
    background: linear-gradient(to right, #f6f6f6 60px, #fff 60px);
}

.d-no { width: 60px; }
.d-time { width: 84px; }

.data th,
.data td {
    height: 16px;
    line-height: 15px;
    font-weight: 400;
    border-right: 1px solid #dedede;
    border-bottom: 1px solid #dedede;
}

.data td {
    padding-right: 2px;
    text-align: right;
    background: #f9faf4;
}

.data thead th {
    line-height: 16px;
    background: #f0f0f0;
}

.data tr th:first-child,
.data .strip th {
    background: #e0e0e0;
    border-color: #f2f2f2;
}

.data .strip th {
    height: 10px;
}

/* Diagramm */
.chart-panel {
    flex: 1;
    min-height: 0;
    display: flex;
    flex-direction: column;
    background: #fff;
}

.chart {
    flex: 1;
    min-height: 0;
    border: 1px solid #f5f2e6;
}

.chart svg {
    display: block;
    width: 100%;
    height: 100%;
}

.chart text {
    font-size: 10px;
    fill: #666;
}

.chart .small {
    font-size: 9px;
}

.grid path {
    fill: none;
    stroke: #999;
    stroke-dasharray: 1 2;
}

.axis,
.tick {
    fill: none;
    stroke: #bdbdbd;
    stroke-width: 2;
}

.tick {
    stroke: #aaa;
}

.axis-head {
    fill: #bdbdbd;
}

.curve {
    fill: none;
    stroke: #55a8ff;
    stroke-width: 2;
}

.points circle {
    fill: #999;
}

.chart-tools {
    display: flex;
    justify-content: flex-end;
    gap: 3px;
    padding: 4px;
}

/* Fußzeile */
.footer {
    position: relative;
    flex: none;
    display: flex;
    align-items: center;
    height: 40px;
    gap: 10px;
    padding: 0 8px 0 9px;
    background: #fff;
}

.color-box {
    width: 20px;
    height: 20px;
    background: #ccffff;
    border: 1px solid #111;
}

.color-box + .tool {
    margin-left: -6px;
}

.dialog-buttons {
    display: flex;
    gap: 9px;
    margin-left: auto;
}

.btn {
    width: 81px;
    height: 22px;
    padding-top: 1px;
    background: #fdfdfd;
    border: 1px solid #dcdcdc;
    border-radius: 3px;
}

.btn.primary {
    border-color: #4a9fe0;
}

.btn:disabled {
    color: #9a9a9a;
    background: #f9f9f9;
    border-color: #ececec;
}

.grip {
    position: absolute;
    right: 1px;
    bottom: 1px;
    width: 9px;
    height: 9px;
    background: radial-gradient(circle, #aaa 1px, transparent 1px) 0 0 / 3px 3px;
    clip-path: polygon(100% 0, 100% 100%, 0 100%);
}

.arrow {
    position: absolute;
    left: 620px;
    top: 200px;
    width: 150px;
    height: 60px;
    fill: none;
}
```
